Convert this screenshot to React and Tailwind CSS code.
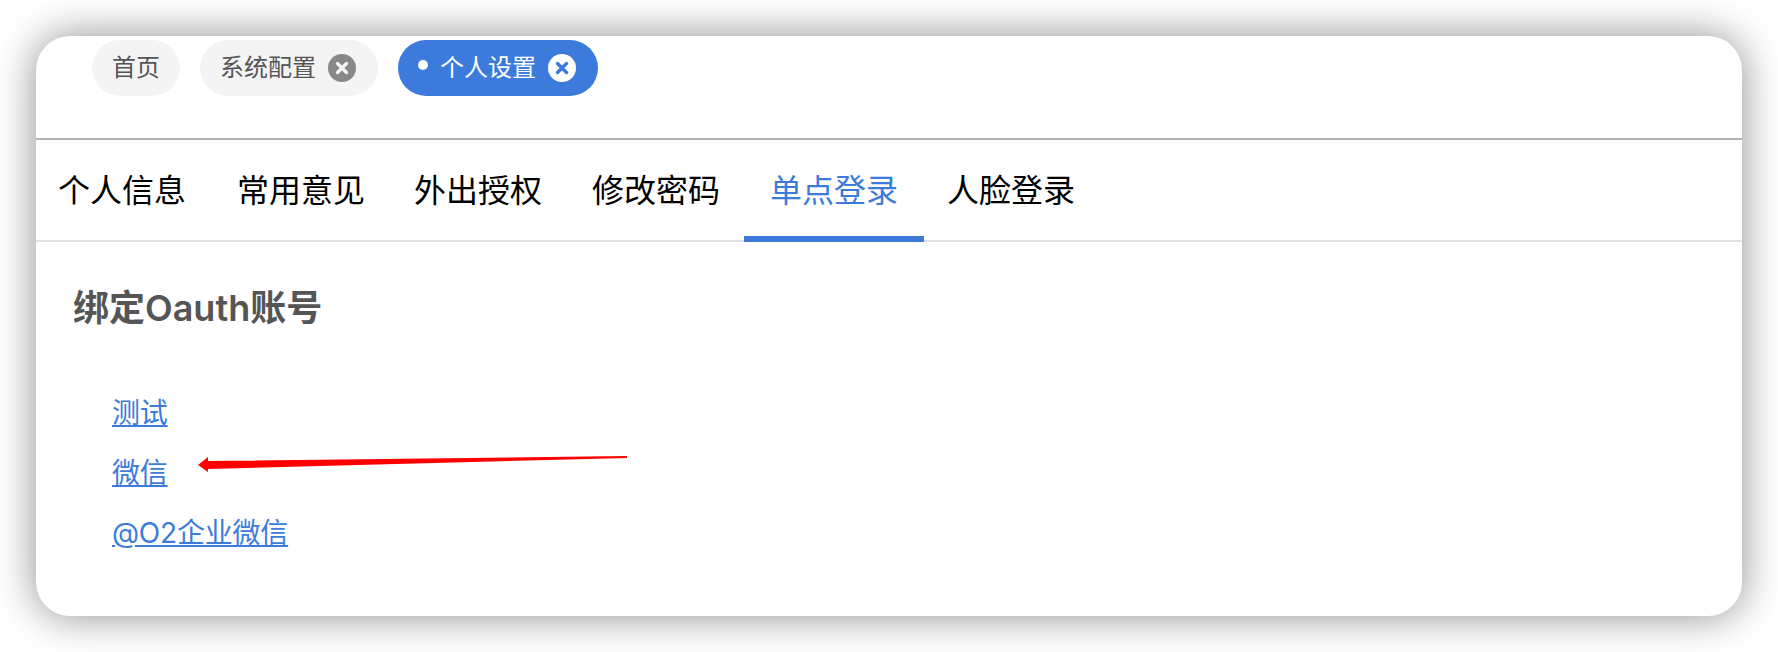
import React from "react";

const FONT = "font-['Inter','Noto_Sans_CJK_SC',sans-serif]";

const tabs = [
  { label: "个人信息", box: "w-[176px] pl-[22px]" },
  { label: "常用意见", box: "w-[177px] pl-[25px]" },
  { label: "外出授权", box: "w-[178px] pl-[25px]" },
  { label: "修改密码", box: "w-[177px] pl-[25px]" },
  { label: "单点登录", box: "w-[180px] pl-[26px]", active: true },
  { label: "人脸登录", box: "w-[176px] pl-[23px]" },
];
const links = ["测试", "微信", "@O2企业微信"];

const CloseIcon = ({ bg, fg }) => (
  <svg width="28" height="28" viewBox="0 0 28 28" className="shrink-0">
    <circle cx="14" cy="14" r="14" fill={bg} />
    <path d="M9.5 9.5l9 9M18.5 9.5l-9 9" stroke={fg} strokeWidth="3.4" strokeLinecap="round" />
  </svg>
);

export default function App() {
  return (
    <div className={`h-[652px] w-[1778px] overflow-hidden bg-white px-9 pt-9 ${FONT}`}>
      <div className="relative h-[580px] w-[1706px] rounded-[34px] bg-white shadow-[0_0_42px_rgba(0,0,0,0.45)]">
        {/* page tabs */}
        <div className="h-[104px] border-b-2 border-[#b2b2b2] pl-14 pt-1">
          <div className="flex gap-5">
            <div className="flex h-14 items-center rounded-[28px] bg-[#f4f4f4] px-5 text-2xl text-[#555555]">
              首页
            </div>
            <div className="flex h-14 items-center gap-3 rounded-[28px] bg-[#f4f4f4] pl-5 pr-[22px] text-2xl text-[#555555]">
              系统配置
              <CloseIcon bg="#888888" fg="#f4f4f4" />
            </div>
            <div className="flex h-14 items-center gap-3 rounded-[28px] bg-[#3c7bdc] pl-5 pr-[22px] text-2xl text-white">
              <span className="mb-1.5 h-2.5 w-2.5 rounded-full bg-white" />
              个人设置
              <CloseIcon bg="#ffffff" fg="#3c7bdc" />
            </div>
          </div>
        </div>

        {/* settings tabs */}
        <div className="flex h-[102px] border-b-2 border-[#e0e0e0] pt-0.5">
          {tabs.map((t) => (
            <div
              key={t.label}
              className={`relative flex items-center text-[32px] ${t.box} ${
                t.active ? "text-[#3c7bdc]" : "text-black"
              }`}
            >
              {t.label}
              {t.active && <span className="absolute inset-x-0 bottom-[-2px] h-1.5 bg-[#3c7bdc]" />}
            </div>
          ))}
        </div>

        {/* oauth */}
        <div className="pl-[37px] pt-10">
          <h2 className="text-[36px] leading-[52px] font-semibold text-[#555555]">绑定Oauth账号</h2>
          <div className="flex flex-col pl-[39px] pt-[49px]">
            {links.map((l) => (
              <a key={l} href="#" className="text-[28px] leading-[60px] tracking-[-0.2px] text-[#3c7bdc] underline">
                {l}
              </a>
            ))}
          </div>
        </div>

        {/* annotation arrow */}
        <svg width="460" height="30" viewBox="0 0 460 30" className="absolute left-[155px] top-[415px]">
          <path d="M436 5 L17 10 L17 6 L7 14 L17 21 L17 18 L436 7 Z" fill="#ff0000" />
        </svg>
      </div>
    </div>
  );
}
